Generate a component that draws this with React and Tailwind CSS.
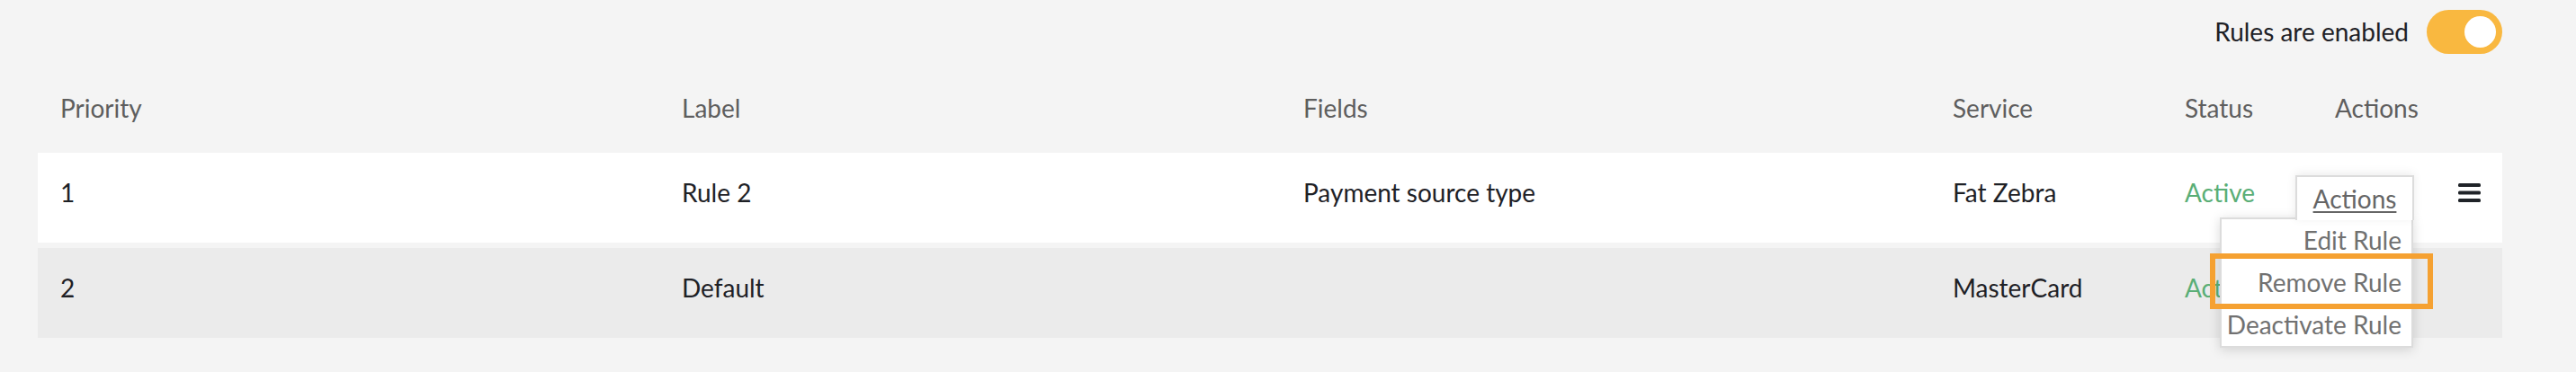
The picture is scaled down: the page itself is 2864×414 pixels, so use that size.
const rules = [
  { priority: "1", label: "Rule 2", fields: "Payment source type", service: "Fat Zebra", status: "Active" },
  { priority: "2", label: "Default", fields: "", service: "MasterCard", status: "Active" },
];

const cols = "grid grid-cols-[691px_691px_722px_258px_167px_1fr]";

function Toggle() {
  return (
    <div className="w-[84px] h-[49px] rounded-full bg-[#f9b840] flex items-center justify-end pr-[7px]">
      <div className="w-[35px] h-[35px] rounded-full bg-white" />
    </div>
  );
}

function Hamburger() {
  return (
    <svg width="25" height="21" viewBox="0 0 25 21" className="text-[#1f2328]">
      <rect x="0" y="0" width="25" height="4" rx="1.5" fill="currentColor" />
      <rect x="0" y="8.5" width="25" height="4" rx="1.5" fill="currentColor" />
      <rect x="0" y="17" width="25" height="4" rx="1.5" fill="currentColor" />
    </svg>
  );
}

function App() {
  return (
    <div className="min-h-screen bg-[#f4f4f4] pl-[42px] pr-[82px] text-[28px] font-['Lato',sans-serif] text-[#1e2126]">
      {/* Top bar */}
      <div className="h-[70px] flex items-center justify-end gap-[20px]">
        <span>Rules are enabled</span>
        <Toggle />
      </div>

      {/* Header */}
      <div className={`${cols} h-[100px] items-center text-[#5e5e5e]`}>
        <div className="pl-[25px]">Priority</div>
        <div className="pl-[25px]">Label</div>
        <div className="pl-[25px]">Fields</div>
        <div className="pl-[25px]">Service</div>
        <div className="pl-[25px]">Status</div>
        <div className="pl-[25px]">Actions</div>
      </div>

      {/* Rows */}
      <div className="relative flex flex-col gap-[6px]">
        {rules.map((r, i) => (
          <div
            key={r.priority}
            className={`${cols} h-[100px] items-center pb-3 ${i === 0 ? "bg-white" : "bg-[#ebebeb]"}`}
          >
            <div className="pl-[25px]">{r.priority}</div>
            <div className="pl-[25px]">{r.label}</div>
            <div className="pl-[25px]">{r.fields}</div>
            <div className="pl-[25px]">{r.service}</div>
            <div className="pl-[25px] text-[#5aae76]">{r.status}</div>
            <div className="flex justify-end pr-[24px]">{i === 0 && <Hamburger />}</div>
          </div>
        ))}

        {/* Actions dropdown */}
        <div className="absolute top-[72px] right-[99px] w-[215px] h-[145px] bg-white border-2 border-[#dcdcdc] shadow-[0_2px_12px_rgba(0,0,0,0.15)] flex flex-col items-end pr-[11px] -mt-0 text-[#717171]">
          <div className="h-12 leading-[46px]">Edit Rule</div>
          <div className="h-12 leading-[46px]">Remove Rule</div>
          <div className="h-12 leading-[46px]">Deactivate Rule</div>
        </div>
        <div className="absolute top-[25px] right-[98px] w-[132px] h-[50px] bg-white border-2 border-b-0 border-[#dcdcdc] shadow-[0_-2px_10px_rgba(0,0,0,0.08)] flex justify-center">
          <span className="leading-[48px] text-[#666] underline decoration-2 underline-offset-[3px]">Actions</span>
        </div>

        {/* Highlight */}
        <div className="absolute top-[112px] right-[77px] w-[248px] h-[62px] border-[6px] border-[#f5a132]" />
      </div>
    </div>
  );
}

export default App;
